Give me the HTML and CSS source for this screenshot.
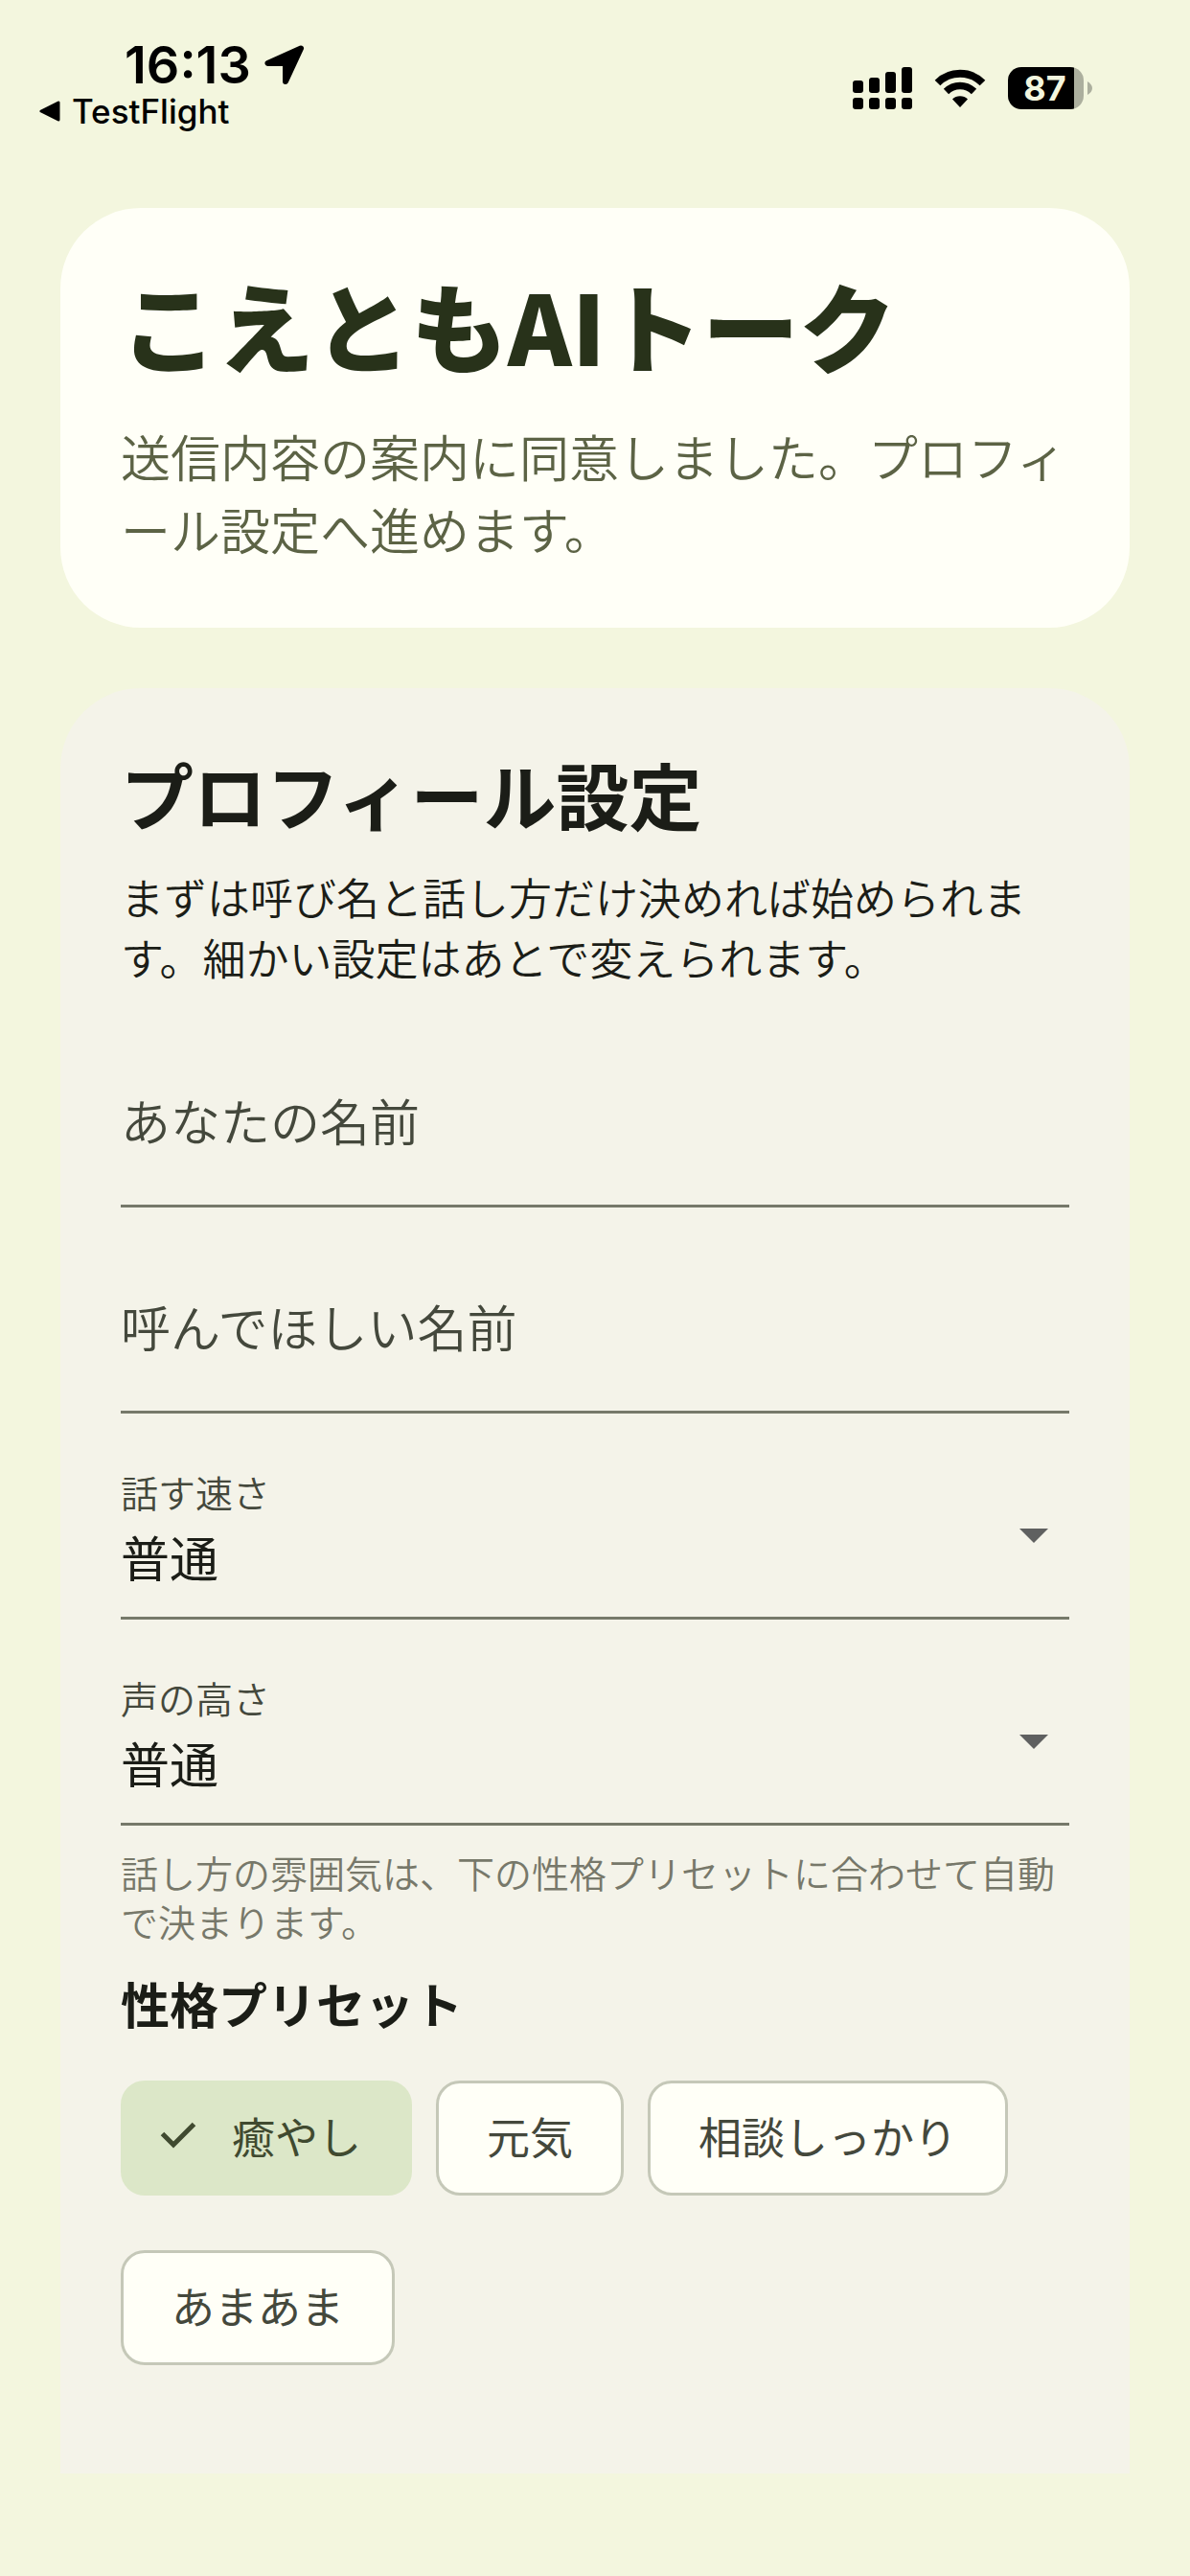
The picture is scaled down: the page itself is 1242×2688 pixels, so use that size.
FILE: index.html
```html
<!DOCTYPE html>
<html lang="ja">

<head>
   <meta charset="UTF-8" />
   <meta name="viewport" content="width=device-width, initial-scale=1" />
   <title>こえともAIトーク</title>
   <link rel="stylesheet" href="styles.css">
</head>

<body>
   <header class="status-bar">
      <div class="status-left">
         <div class="status-time">
            <span>16:13</span>
            <svg class="icon-location" viewBox="0 0 42 42" aria-hidden="true">
               <path d="M38 3.500 L3.500 19 H22 V38 Z" fill="#000" stroke="#000" stroke-width="6" stroke-linejoin="round" />
            </svg>
         </div>
         <a class="back-link" href="#">
            <svg class="icon-back" viewBox="0 0 22 22" aria-hidden="true">
               <path d="M2 11 L20 2 V20 Z" fill="#000" stroke="#000" stroke-width="3" stroke-linejoin="round" />
            </svg>
            TestFlight
         </a>
      </div>

      <div class="status-right">
         <svg class="icon-signal" viewBox="0 0 62 44" aria-hidden="true">
            <rect x="0" y="14" width="11" height="13" rx="3" />
            <rect x="17" y="11" width="11" height="16" rx="3" />
            <rect x="34" y="5" width="11" height="22" rx="3" />
            <rect x="51" y="0" width="11" height="27" rx="3" />
            <rect x="0" y="32" width="11" height="12" rx="3" />
            <rect x="17" y="32" width="11" height="12" rx="3" />
            <rect x="34" y="32" width="11" height="12" rx="3" />
            <rect x="51" y="32" width="11" height="12" rx="3" />
         </svg>
         <svg class="icon-wifi" viewBox="0 0 54 40" aria-hidden="true">
            <path d="M3.5 14.5 A33.5 33.5 0 0 1 50.500 14.5" fill="none" stroke="#000" stroke-width="8" />
            <path d="M12.500 23.500 A20.500 20.500 0 0 1 41.500 23.500" fill="none" stroke="#000" stroke-width="7.500" />
            <path d="M27 40 L19 31.500 A11.500 11.500 0 0 1 35 31.500 Z" />
         </svg>
         <div class="battery">
            <span class="battery-level">87</span>
            <svg class="battery-tip" viewBox="0 0 5 14" aria-hidden="true">
               <path d="M0 0 C3 2 5 4 5 7 S3 12 0 14 Z" />
            </svg>
         </div>
      </div>
   </header>

   <main class="content">
      <section class="card hero">
         <h1>こえともAIトーク</h1>
         <p>送信内容の案内に同意しました。プロフィール設定へ進めます。</p>
      </section>

      <form class="card profile">
         <h2>プロフィール設定</h2>
         <p class="lead">まずは呼び名と話し方だけ決めれば始められます。細かい設定はあとで変えられます。</p>

         <div class="fields">
            <div class="field">
               <input type="text" id="name" />
               <label class="floating" for="name">あなたの名前</label>
            </div>
            <div class="field">
               <input type="text" id="nickname" />
               <label class="floating" for="nickname">呼んでほしい名前</label>
            </div>
            <div class="field">
               <label for="speed">話す速さ</label>
               <select id="speed">
                  <option>普通</option>
               </select>
               <svg class="icon-arrow" viewBox="0 0 30 15" aria-hidden="true">
                  <path d="M0 0 H30 L15 15 Z" />
               </svg>
            </div>
            <div class="field">
               <label for="pitch">声の高さ</label>
               <select id="pitch">
                  <option>普通</option>
               </select>
               <svg class="icon-arrow" viewBox="0 0 30 15" aria-hidden="true">
                  <path d="M0 0 H30 L15 15 Z" />
               </svg>
            </div>
         </div>

         <p class="helper">話し方の雰囲気は、下の性格プリセットに合わせて自動で決まります。</p>

         <h3>性格プリセット</h3>
         <div class="chips">
            <button type="button" class="chip selected" aria-pressed="true">
               <svg class="icon-check" viewBox="0 0 38 28" aria-hidden="true">
                  <path d="M2.500 12.500 L14 24 L35.500 2.500" fill="none" stroke="currentColor" stroke-width="5" />
               </svg>
               癒やし
            </button>
            <button type="button" class="chip" aria-pressed="false">元気</button>
            <button type="button" class="chip" aria-pressed="false">相談しっかり</button>
            <button type="button" class="chip" aria-pressed="false">あまあま</button>
         </div>
      </form>
   </main>
</body>

</html>
```

FILE: styles.css
```css
:root {
   --bg: #f3f6de;
   --surface: #fffff7;
   --card: #f4f3e9;
   --text: #1b1d17;
   --muted: #44483c;
   --helper: #77786a;
   --line: #76796a;
   --chip-line: #c5c8b8;
   --chip-selected: #dce7c8;
}

* {
   box-sizing: border-box;
   margin: 0;
   padding: 0;
}

body {
   font-family: 'Noto Sans CJK JP', sans-serif;
   background: var(--bg);
   color: var(--text);
   min-height: 100vh;
   display: flex;
   flex-direction: column;
   line-break: loose;
}

/* status bar */
.status-bar {
   display: flex;
   justify-content: space-between;
   align-items: flex-start;
   padding: 40px 102px 0 41px;
   height: 217px;
   font-family: Inter, sans-serif;
   color: #000;
}

.status-time {
   display: flex;
   align-items: center;
   gap: 14px;
   padding-left: 89px;
   font-size: 54px;
   font-weight: 600;
   line-height: 56px;
}

.icon-location {
   width: 42px;
   height: 42px;
}

.back-link {
   display: flex;
   align-items: center;
   gap: 12px;
   color: inherit;
   text-decoration: none;
   font-size: 35px;
   font-weight: 500;
   line-height: 40px;
}

.icon-back {
   width: 22px;
   height: 22px;
}

.status-right {
   display: flex;
   align-items: center;
   gap: 23px;
   padding-top: 30px;
}

.icon-signal {
   width: 62px;
   height: 44px;
}

.icon-wifi {
   width: 54px;
   height: 40px;
}

.battery {
   display: flex;
   align-items: center;
   gap: 4px;
}

.battery-level {
   width: 79px;
   height: 44px;
   padding-right: 2px;
   border-radius: 14px;
   background: linear-gradient(to right, #000 69px, #acaf9e 69px);
   color: var(--bg);
   font-size: 36px;
   font-weight: 700;
   line-height: 44px;
   text-align: center;
}

.battery-tip {
   width: 5px;
   height: 14px;
   fill: #acaf9e;
}

/* cards */
.content {
   flex: 1;
   display: flex;
   flex-direction: column;
   gap: 63px;
   padding: 0 63px 107px;
}

.card {
   padding: 63px;
   border-radius: 84px;
   background: var(--card);
}

.hero {
   padding-bottom: 65px;
   background: var(--surface);
}

.hero h1 {
   margin-bottom: 42px;
   color: #28321a;
   font-size: 101px;
   font-weight: 900;
   line-height: 116px;
}

.hero p {
   color: #5c6345;
   font-size: 52px;
   font-weight: 350;
   line-height: 76px;
}

.profile {
   flex: 1;
   border-radius: 84px 84px 0 0;
}

.profile h2 {
   margin-bottom: 29px;
   font-size: 76px;
   font-weight: 700;
   line-height: 94px;
}

.lead {
   margin-bottom: 59px;
   font-size: 45px;
   font-weight: 350;
   line-height: 63px;
}

/* form fields */
.fields {
   display: flex;
   flex-direction: column;
   gap: 44px;
}

.field {
   position: relative;
   display: flex;
   flex-direction: column;
   height: 171px;
   padding-top: 12px;
   border-bottom: 3px solid var(--line);
}

.field label {
   color: var(--muted);
   font-size: 39px;
   font-weight: 350;
   line-height: 51px;
}

.field .floating {
   position: absolute;
   top: 42px;
   left: 0;
   font-size: 52px;
   line-height: 76px;
   pointer-events: none;
}

.field input,
.field select {
   width: 100%;
   height: 84px;
   border: none;
   outline: none;
   background: transparent;
   color: var(--text);
   font-family: inherit;
   font-size: 51px;
   appearance: none;
}

.field input {
   flex: 1;
}

.icon-arrow {
   position: absolute;
   top: 76px;
   right: 22px;
   width: 30px;
   height: 15px;
   fill: #5f6060;
   pointer-events: none;
}

.helper {
   margin: 23px 0 22px;
   color: var(--helper);
   font-size: 39px;
   font-weight: 350;
   line-height: 51px;
}

.profile h3 {
   margin-bottom: 43px;
   font-size: 51px;
   font-weight: 700;
   line-height: 76px;
}

/* preset chips */
.chips {
   display: flex;
   flex-wrap: wrap;
   gap: 57px 25px;
}

.chip {
   display: flex;
   align-items: center;
   height: 120px;
   padding: 0 50px 6px;
   border: 3px solid var(--chip-line);
   border-radius: 25px;
   background: var(--surface);
   color: var(--muted);
   font-family: inherit;
   font-size: 45px;
   cursor: pointer;
}

.chip.selected {
   gap: 37px;
   padding-left: 38px;
   border-color: var(--chip-selected);
   background: var(--chip-selected);
   color: #404a30;
}

.icon-check {
   width: 38px;
   height: 28px;
}
```
